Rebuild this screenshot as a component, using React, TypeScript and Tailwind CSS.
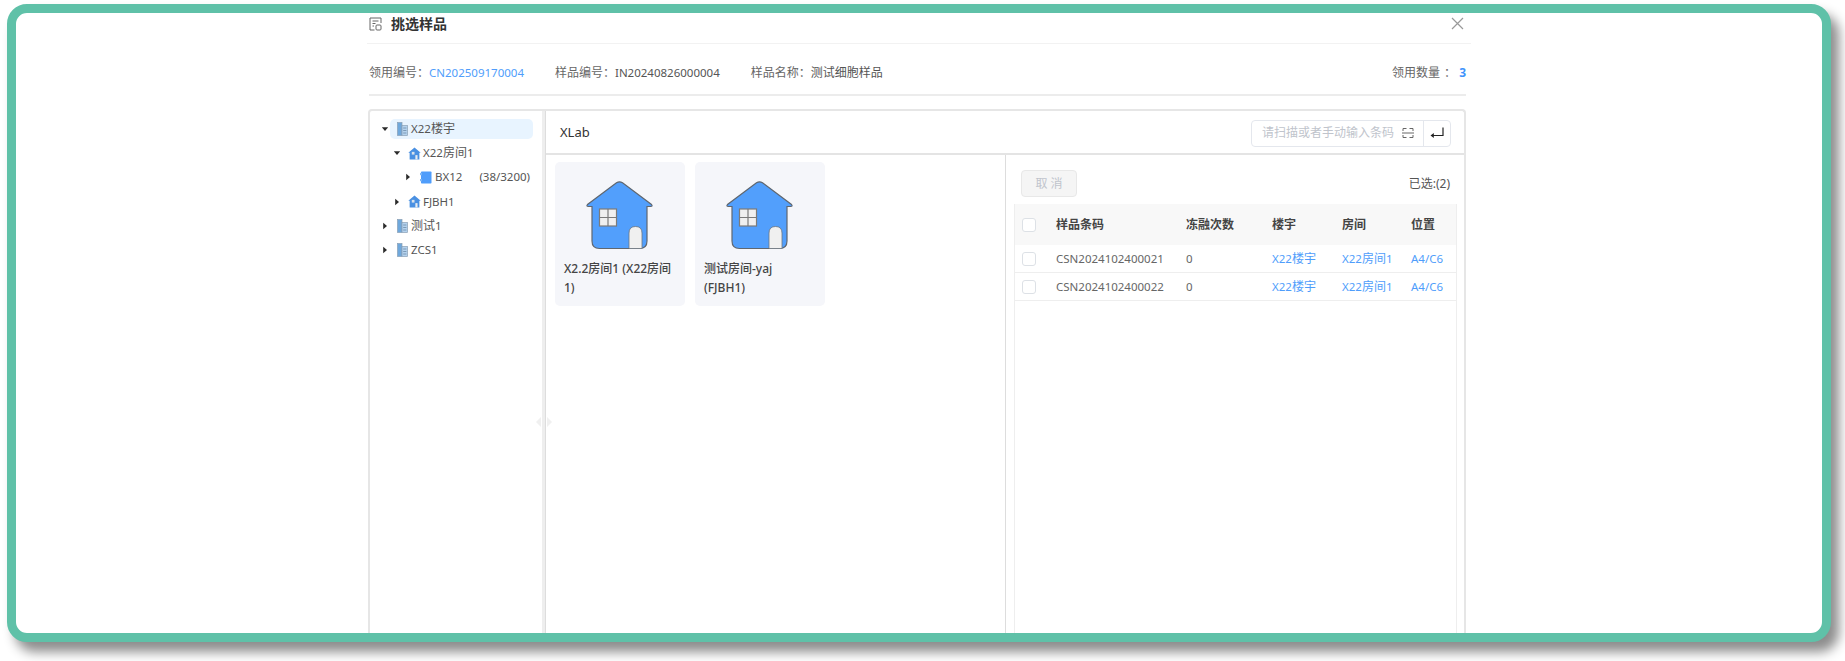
import React from "react";

const T = ({ s }: { s: string }) => (
  <>
    {s.split(/([\x00-\x7f]+)/).map((p, i) =>
      /[\x00-\x7f]/.test(p) ? (
        <span key={i} className="text-[11.5px]">
          {p}
        </span>
      ) : (
        <span key={i}>{p}</span>
      )
    )}
  </>
);

const Caret = ({ open }: { open?: boolean }) => (
  <svg width="8" height="8" viewBox="0 0 8 8" className="shrink-0">
    {open ? <path d="M0.8 2.2H7.2L4 6Z" fill="#2b2b2b" /> : <path d="M2.2 0.8V7.2L6 4Z" fill="#2b2b2b" />}
  </svg>
);

const Building = () => (
  <svg width="12" height="14" viewBox="0 0 12 14" className="shrink-0">
    <rect x="0.5" y="0.5" width="4.5" height="13" fill="#6fa8dc" stroke="#8aa0b5" strokeWidth="0.7" />
    <rect x="5" y="3.5" width="5.5" height="10" fill="#b4d2ee" stroke="#8aa0b5" strokeWidth="0.7" />
    <path d="M6.2 6H9.4M6.2 8.5H9.4M6.2 11H9.4" stroke="#6d8ba8" strokeWidth="0.8" />
  </svg>
);

const SmallHouse = () => (
  <svg width="13" height="13" viewBox="0 0 12 12" className="shrink-0 -ml-[1px]">
    <path d="M6 0.5L11.7 5.2H10.5V11.5H1.5V5.2H0.3Z" fill="#4a90e2" />
    <rect x="3.5" y="4.5" width="2.5" height="2.5" fill="#d9e2ec" />
    <rect x="6.8" y="7.5" width="2" height="4" fill="#e8ecf0" />
  </svg>
);

const Box = () => (
  <svg width="12" height="13" viewBox="0 0 12 13" className="shrink-0">
    <rect x="1" y="0.5" width="10.5" height="12" rx="0.8" fill="#4f9dfb" />
    <rect x="0" y="2" width="2" height="2.2" fill="#7db6f5" />
    <rect x="0" y="8" width="2" height="2.2" fill="#7db6f5" />
  </svg>
);

const House = () => (
  <svg width="67" height="69" viewBox="0 0 67 69" className="ml-[22px] block">
    <path
      d="M30.5 1.8Q33.5 -0.2 36.5 1.8L65.5 23.5Q67 25.5 64.5 25.5H61V60Q61 67.5 53.5 67.5H13.5Q6 67.5 6 60V25.5H2.5Q0 25.5 1.5 23.5Z"
      fill="#529ffc"
      stroke="#5f6770"
      strokeWidth="1.2"
    />
    <rect x="13.5" y="28" width="17" height="17" fill="#f0f0f0" stroke="#7b7b7b" strokeWidth="1.2" />
    <path d="M22 28V45M13.5 36.5H30.5" stroke="#7b7b7b" strokeWidth="1.2" />
    <path d="M43 67.5V52Q43 45.5 49.5 45.5Q56 45.5 56 52V67.5Z" fill="#f0f0f0" stroke="#6d7680" strokeWidth="0.8" />
  </svg>
);

const TitleIcon = () => (
  <svg width="13" height="14" viewBox="0 0 13 14" fill="none" stroke="#666" strokeWidth="1" className="shrink-0">
    <path d="M12 6V1H1V13H5.5" />
    <path d="M3.5 4H9.5M3.5 6.5H6.5M3.5 9H5" />
    <rect x="7" y="8" width="5" height="5" rx="1" />
  </svg>
);

const Scan = () => (
  <svg width="12" height="12" viewBox="0 0 12 12" fill="none" stroke="#666" strokeWidth="1" className="shrink-0">
    <path d="M1 4V1.5H4.5M7.5 1.5H11V4M1 8V10.5H4.5M7.5 10.5H11V8M0 6H12" />
  </svg>
);

const Enter = () => (
  <svg width="15" height="12" viewBox="0 0 15 12" className="shrink-0">
    <path d="M13 0.5V8.5H2" fill="none" stroke="#222" strokeWidth="1.2" />
    <path d="M0.5 8.5L3.8 6V11Z" fill="#222" />
  </svg>
);

const Check = () => <span className="block w-[14px] h-[14px] rounded-[3px] border border-[#dde1e6] bg-white" />;

const TreeRow = ({
  pad,
  open,
  icon,
  label,
  extra,
  active,
  gap,
}: {
  pad: string;
  open?: boolean;
  icon: React.ReactNode;
  label: string;
  extra?: string;
  active?: boolean;
  gap: string;
}) => (
  <div className={`flex items-center h-[24.2px] ${pad}`}>
    <Caret open={open} />
    <div className={`flex items-center flex-1 h-[20.5px] ml-[1px] pl-[7px] rounded-[5px] ${active ? "bg-[#e8f4ff]" : ""}`}>
      {icon}
      <span className={`${gap} text-[12px] text-[#555] whitespace-nowrap`}>
        <T s={label} />
      </span>
      {extra && (
        <span className="ml-[17px] text-[12px] text-[#555] whitespace-nowrap">
          <T s={extra} />
        </span>
      )}
    </div>
  </div>
);

const Card = ({ lines }: { lines: string[] }) => (
  <div className="w-[130px] h-[144px] rounded-[5px] bg-[#f5f6fa] pt-[19px] px-[9px]">
    <House />
    <div className="mt-[9px] text-[12px] leading-[19px] font-medium text-[#444]">
      {lines.map((l) => (
        <div key={l} className="whitespace-nowrap">
          {l}
        </div>
      ))}
    </div>
  </div>
);

const rows = ["CSN2024102400021", "CSN2024102400022"];

export default function App() {
  return (
    <div className="w-[1845px] h-[661px] bg-white overflow-hidden pt-[4px] pl-[7px] font-['Noto_Sans','Noto_Sans_CJK_SC',sans-serif]">
      <div className="w-[1824px] h-[638px] rounded-[20px] border-[9px] border-[#5fc1a8] bg-white overflow-hidden shadow-[8px_10px_12px_rgba(0,0,0,0.45)]">
        <div className="ml-[351px] w-[1104px]">
          <div className="h-[31px] border-b border-[#f2f2f2] flex items-center pl-[2px] pr-[7px] pb-[9px]">
            <TitleIcon />
            <span className="ml-[9px] text-[14px] font-bold text-[#333]">挑选样品</span>
            <svg width="13" height="13" viewBox="0 0 13 13" className="ml-auto" stroke="#999" strokeWidth="1.2">
              <path d="M1 1L12 12M12 1L1 12" />
            </svg>
          </div>
          <div className="h-[52px] ml-[2px] w-[1097px] pt-[8px] border-b-2 border-[#ececec] flex items-center text-[12px] text-[#666]">
            <span>领用编号：</span>
            <span className="text-[11.5px] text-[#4f9dfb]">CN202509170004</span>
            <span className="ml-[31px]">样品编号：</span>
            <span className="text-[11.5px] text-[#555]">IN20240826000004</span>
            <span className="ml-[31px]">样品名称：</span>
            <span className="text-[#555]">测试细胞样品</span>
            <span className="ml-auto">领用数量</span>
            <span className="ml-[4px]">：</span>
            <span className="ml-[3px] font-bold text-[#3f93fb]">3</span>
          </div>
          <div className="relative mt-[13px] ml-[1px] w-[1098px] h-[530px] flex border-2 border-b-0 border-[#e6e6e6] rounded-t-[4px]">
            <div className="w-[172px] shrink-0 pt-[6px] pl-[11px] pr-[9px]">
              <TreeRow pad="" open icon={<Building />} label="X22楼宇" active gap="ml-[2px]" />
              <TreeRow pad="pl-[12px]" open icon={<SmallHouse />} label="X22房间1" gap="ml-[2px]" />
              <TreeRow pad="pl-[23px]" icon={<Box />} label="BX12" extra="(38/3200)" gap="ml-[3px]" />
              <TreeRow pad="pl-[12px]" icon={<SmallHouse />} label="FJBH1" gap="ml-[2px]" />
              <TreeRow pad="" icon={<Building />} label="测试1" gap="ml-[2px]" />
              <TreeRow pad="" icon={<Building />} label="ZCS1" gap="ml-[2px]" />
            </div>
            <div className="w-[3px] shrink-0 bg-[#eeeeee]" />
            <div className="flex-1 border-l border-[#dddddd] min-w-0">
              <div className="h-[44px] border-b-2 border-[#e4e4e4] flex items-center pl-[14px] pr-[13px] pt-[2px]">
                <span className="text-[13px] text-[#333]">XLab</span>
                <div className="ml-auto w-[200px] h-[27px] border border-[#e4e7ed] rounded-[4px] flex items-center">
                  <span className="ml-[10px] text-[12px] text-[#c0c4cc] whitespace-nowrap">请扫描或者手动输入条码</span>
                  <span className="ml-[8px]">
                    <Scan />
                  </span>
                  <span className="ml-auto h-full w-[27px] border-l border-[#e4e7ed] flex items-center justify-center">
                    <Enter />
                  </span>
                </div>
              </div>
              <div className="flex h-[480px]">
                <div className="w-[460px] shrink-0 border-r border-[#dddddd] pt-[7px] pl-[9px] flex items-start gap-[10px]">
                  <Card lines={["X2.2房间1 (X22房间", "1)"]} />
                  <Card lines={["测试房间-yaj", "(FJBH1)"]} />
                </div>
                <div className="flex-1 pl-[8px] pr-[7px] min-w-0">
                  <div className="h-[49px] flex items-center justify-between pl-[7px] pr-[7px] pt-[8px]">
                    <span className="w-[56px] h-[27px] rounded-[4px] border border-[#e8e8e8] bg-[#f5f5f5] text-[12px] text-[#c0c4cc] flex items-center justify-center">
                      取 消
                    </span>
                    <span className="text-[12px] text-[#555]">已选:(2)</span>
                  </div>
                  <div className="h-[430px] border-x border-[#eeeeee]">
                    <div className="h-[41px] bg-[#f8f8f8] grid grid-cols-[41px_130px_86px_70px_69px_1fr] items-center text-[12px] font-bold text-[#444]">
                      <span className="pl-[7px]">
                        <Check />
                      </span>
                      <span>样品条码</span>
                      <span>冻融次数</span>
                      <span>楼宇</span>
                      <span>房间</span>
                      <span>位置</span>
                    </div>
                    {rows.map((r) => (
                      <div
                        key={r}
                        className="h-[28px] border-b border-[#eeeeee] grid grid-cols-[41px_130px_86px_70px_69px_1fr] items-center text-[12px] text-[#666]"
                      >
                        <span className="pl-[7px]">
                          <Check />
                        </span>
                        <span className="text-[11.5px]">{r}</span>
                        <span className="text-[11.5px]">0</span>
                        <span className="text-[#4f9dfb]">
                          <T s="X22楼宇" />
                        </span>
                        <span className="text-[#4f9dfb]">
                          <T s="X22房间1" />
                        </span>
                        <span className="text-[#4f9dfb] text-[11.5px]">A4/C6</span>
                      </div>
                    ))}
                  </div>
                </div>
              </div>
            </div>
            <div className="absolute left-[166px] top-[306px] flex gap-[6px]">
              <svg width="5" height="10" viewBox="0 0 5 10">
                <path d="M5 0V10L0 5Z" fill="#f0f0f0" />
              </svg>
              <svg width="5" height="10" viewBox="0 0 5 10">
                <path d="M0 0V10L5 5Z" fill="#f0f0f0" />
              </svg>
            </div>
          </div>
        </div>
      </div>
    </div>
  );
}
